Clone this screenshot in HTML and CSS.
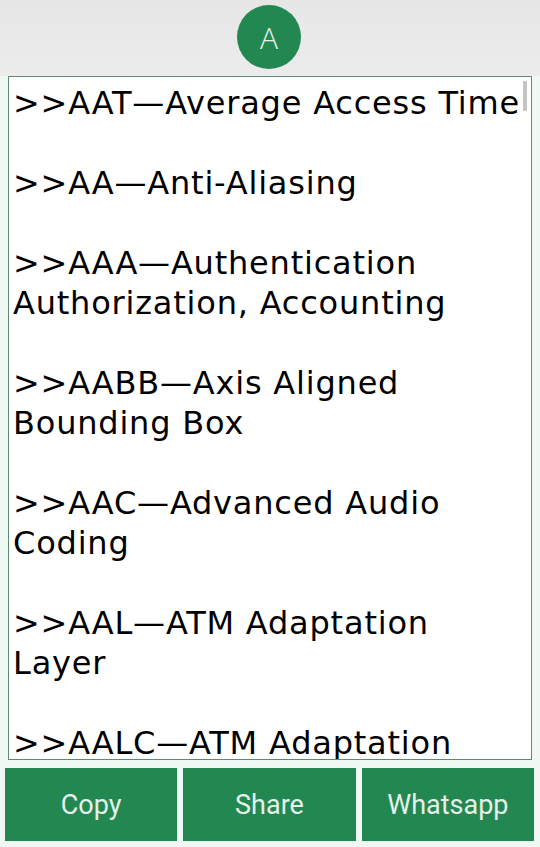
FILE: index.html
```html
<!DOCTYPE html>
<html>
<head>
<meta charset="utf-8">
<link rel="stylesheet" href="styles.css">
</head>
<body>
<div class="app">
  <header class="top">
    <div class="avatar">A</div>
  </header>
  <main class="box">
    <div class="text">&gt;&gt;AAT—Average Access Time

&gt;&gt;AA—Anti-Aliasing

&gt;&gt;AAA—Authentication Authorization, Accounting

&gt;&gt;AABB—Axis Aligned Bounding Box

&gt;&gt;AAC—Advanced Audio Coding

&gt;&gt;AAL—ATM Adaptation Layer

&gt;&gt;AALC—ATM Adaptation Layer Connection

&gt;&gt;AAM—Automatic Answering Machine</div>
    <div class="thumb"></div>
  </main>
  <footer class="actions">
    <button class="btn">Copy</button>
    <button class="btn">Share</button>
    <button class="btn">Whatsapp</button>
  </footer>
</div>
</body>
</html>
```

FILE: styles.css
```css
html, body {
  margin: 0;
  padding: 0;
}
body {
  width: 540px;
  height: 847px;
  background: #f0f8f4;
  overflow: hidden;
}
.app {
  display: flex;
  flex-direction: column;
  height: 847px;
}
.top {
  height: 76px;
  display: flex;
  justify-content: center;
  align-items: flex-start;
  background: linear-gradient(#e6e6e6, #ececec);
}
.avatar {
  margin-top: 5px;
  margin-left: -2px;
  width: 64px;
  height: 64px;
  border-radius: 50%;
  background: #238752;
  color: #e6f3ea;
  font-family: "Open Sans", sans-serif;
  font-size: 30px;
  font-weight: 300;
  display: flex;
  align-items: center;
  justify-content: center;
}
.box {
  position: relative;
  margin: 0 8px 0 8px;
  height: 682px;
  border: 1px solid #5e8a72;
  background: #ffffff;
  overflow: hidden;
}
.text {
  padding: 6px 0 0 4px;
  font-family: "DejaVu Sans", sans-serif;
  font-size: 32px;
  line-height: 40px;
  color: #000;
  white-space: pre-wrap;
  letter-spacing: 0.8px;
}
.thumb {
  position: absolute;
  right: 4px;
  top: 4px;
  width: 4px;
  height: 30px;
  background: #c4c4c4;
}
.actions {
  display: flex;
  gap: 6px;
  padding: 8px 6px 6px 5px;
}
.btn {
  flex: 1;
  height: 73px;
  border: none;
  background: #238752;
  color: #e4f2e9;
  font-family: Roboto, sans-serif;
  font-size: 27px;
  padding: 0;
}
```
